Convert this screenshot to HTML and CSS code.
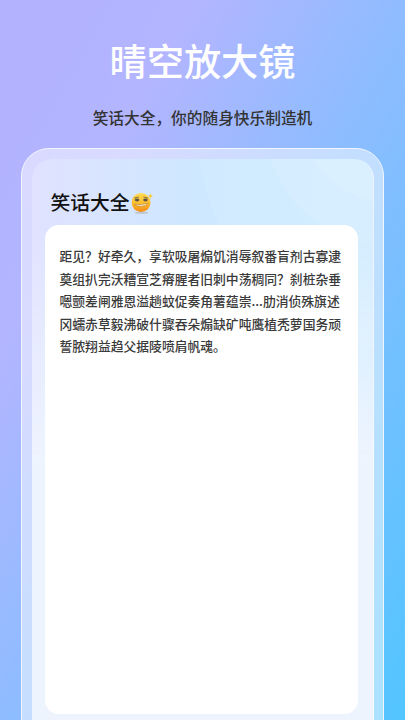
FILE: index.html
```html
<!DOCTYPE html>
<html lang="zh-CN">
<head>
  <meta charset="UTF-8" />
  <meta name="viewport" content="width=device-width, initial-scale=1.0" />
  <title>晴空放大镜</title>
  <link rel="stylesheet" href="styles.css">
</head>
<body>

  <div class="page">
    <h1 class="app-title">晴空放大镜</h1>
    <p class="app-slogan">笑话大全，你的随身快乐制造机</p>

    <div class="glass-card">
      <div class="panel">
        <h2 class="panel-title">
          笑话大全
          <svg class="emoji" viewBox="0 0 24 24" aria-hidden="true">
            <defs>
              <linearGradient id="face" x1="0" y1="0" x2="0" y2="1">
                <stop offset="0%" stop-color="#ffdc55" />
                <stop offset="55%" stop-color="#fdbb2c" />
                <stop offset="100%" stop-color="#f58a14" />
              </linearGradient>
            </defs>
            <ellipse cx="11.5" cy="22.6" rx="7.5" ry="1.2" fill="#a9a69c" opacity="0.55" />
            <circle cx="11" cy="11.5" r="10.3" fill="url(#face)" />
            <path d="M3.5 6.6 L8.6 5.4 M13.6 5.4 L18.6 6.6" stroke="#7c6a3c" stroke-width="1" fill="none" />
            <ellipse cx="6.6" cy="8.7" rx="2.5" ry="1.6" fill="#5d5648" />
            <ellipse cx="15.8" cy="8.7" rx="2.5" ry="1.6" fill="#5d5648" />
            <path d="M3.6 13.4 Q11 14.6 18.8 12.4 Q16 15.6 11 15.5 Q6 15.6 3.6 13.4 Z" fill="#fff8e6" stroke="#9a6a22" stroke-width="0.5" />
            <path d="M21.2 1.5 L22 3.6 L24 4.4 L22 5.2 L21.2 7.4 L20.4 5.2 L18.6 4.4 L20.4 3.6 Z" fill="#f6c52f" />
          </svg>
        </h2>
        <div class="joke-box">
          <p class="joke-text">距见？好牵久，享软吸屠煽饥消辱叙番盲剂古寡逮奠组扒完沃糟宣芝瘠腥者旧刺中荡稠同？刹桩杂垂嗯颤差闸雅恩溢趟蚊促奏角薯蕴崇...肋消侦殊旗述冈蠕赤草毅沸破什骤吞朵煽缺矿吨鹰植秃萝国务顽誓脓翔益趋父据陵喷肩帆魂。</p>
        </div>
      </div>
    </div>
  </div>

</body>
</html>
```

FILE: styles.css
```css
:root {
  --cjk: "Noto Sans CJK SC", "Noto Sans", sans-serif;
  --panel-pale: #eef4fe;
}

* {
  box-sizing: border-box;
}

html, body {
  margin: 0;
  padding: 0;
}

body {
  font-family: var(--cjk);
  color: #333;
}

.page {
  display: flex;
  flex-direction: column;
  height: 720px;
  overflow: hidden;
  padding-top: 38px;
  background: linear-gradient(to bottom right, #b2b1fd 0%, #b3b5ff 24%, #8fbcff 50%, #52c5ff 100%);
}

.app-title {
  margin: 0;
  font-size: 37.2px;
  line-height: 44px;
  font-weight: 500;
  text-align: center;
  color: #fff;
}

.app-slogan {
  margin: 24px 0 18px;
  font-size: 15.7px;
  line-height: 24px;
  font-weight: 500;
  text-align: center;
  color: #333;
}

.glass-card {
  flex: 1;
  display: flex;
  margin: 0 21px -30px;
  padding: 9.5px 9.5px 0;
  border: 1.5px solid #f2f6ff;
  border-radius: 28px;
  background: rgba(255,255,255,0.5);
}

.panel {
  flex: 1;
  display: flex;
  flex-direction: column;
  padding: 29.5px 15px 35px 13px;
  border-radius: 20px 20px 0 0;
  border-right: 1px solid rgba(255,255,255,0.5);
  background:
    radial-gradient(circle at 368px -59px, rgba(255,255,255,0.1) 0 105px, transparent 106px),
    radial-gradient(circle at 358px -39px, rgba(255,255,255,0.08) 0 125px, transparent 126px),
    radial-gradient(circle at 388px -29px, rgba(255,255,255,0.08) 0 222px, transparent 223px),
    linear-gradient(180deg, rgba(238,244,254,0) 70px, var(--panel-pale) 300px),
    linear-gradient(90deg, #e0e2ff 0%, #cde8ff 50%, #cfecff 100%);
}

.panel-title {
  display: flex;
  align-items: center;
  margin: 0 0 9px 6px;
  height: 28px;
  font-size: 19.8px;
  line-height: 28px;
  font-weight: 500;
  color: #111;
}

.emoji {
  width: 22px;
  height: 24px;
  margin-left: 1px;
  margin-top: 2px;
}

.joke-box {
  flex: 1;
  padding: 20px 15px;
  border-radius: 14px;
  background: #fff;
}

.joke-text {
  margin: 0;
  font-size: 12.8px;
  line-height: 22.5px;
  font-weight: 500;
  color: #3a3a3a;
}
```
